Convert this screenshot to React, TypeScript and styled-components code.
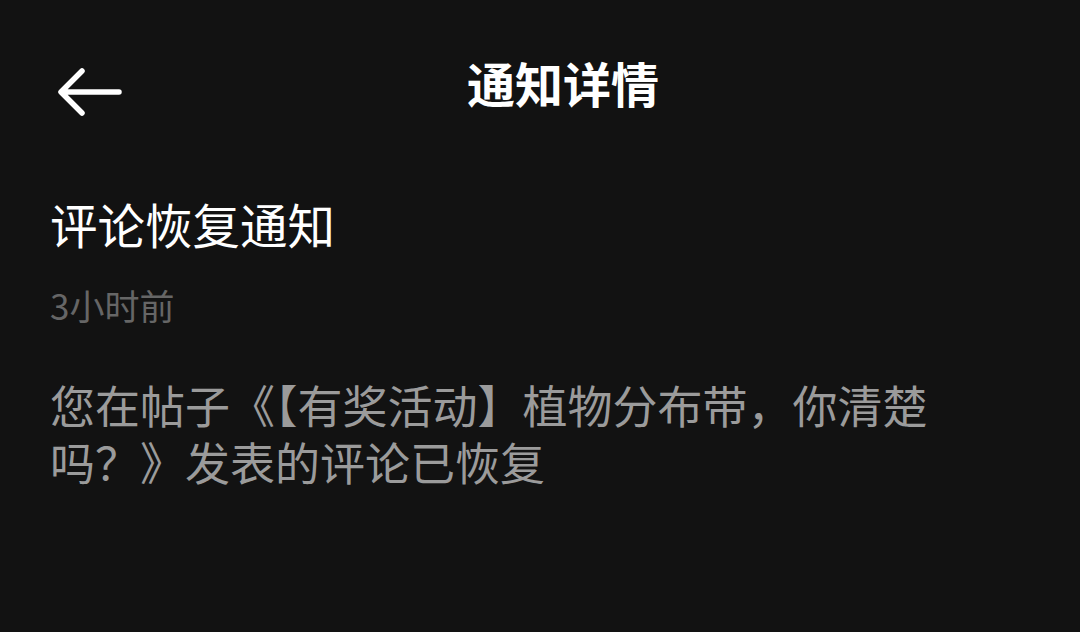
import React from 'react';
import styled, { createGlobalStyle } from 'styled-components';

const GlobalStyle = createGlobalStyle`
  html, body {
    margin: 0;
    padding: 0;
    background: #121212;
  }
  body {
    font-family: "Noto Sans CJK SC", "Noto Sans", sans-serif;
  }
`;

const notice = {
  title: '评论恢复通知',
  time: '3小时前',
  body: '您在帖子《【有奖活动】植物分布带，你清楚吗？》发表的评论已恢复',
};

export default function App() {
  return (
    <>
      <GlobalStyle />
      <Page>
        <Header>
          <BackButton aria-label="返回">
            <svg width="66" height="50" viewBox="0 0 66 50" fill="none">
              <path
                d="M63 25H6M26 4L5 25l21 21"
                stroke="#fff"
                strokeWidth="5.5"
                strokeLinecap="round"
                strokeLinejoin="round"
              />
            </svg>
          </BackButton>
          <HeaderTitle>通知详情</HeaderTitle>
        </Header>
        <Content>
          <NoticeTitle>{notice.title}</NoticeTitle>
          <NoticeTime>{notice.time}</NoticeTime>
          <NoticeBody>{notice.body}</NoticeBody>
        </Content>
      </Page>
    </>
  );
}

const Page = styled.div`
  width: 1080px;
  height: 632px;
  background: #121212;
  overflow: hidden;
`;

const Header = styled.div`
  position: relative;
  display: flex;
  align-items: center;
  height: 176px;
  padding: 0 0 0 56px;
  box-sizing: border-box;
`;

const BackButton = styled.div`
  display: flex;
  align-items: center;
  margin-top: 8px;
`;

const HeaderTitle = styled.div`
  position: absolute;
  left: 0;
  right: 0;
  top: 50px;
  padding-left: 46px;
  text-align: center;
  color: #fff;
  font-size: 48px;
  font-weight: 700;
  line-height: 64px;
`;

const Content = styled.div`
  display: flex;
  flex-direction: column;
  padding: 0 50px;
`;

const NoticeTitle = styled.div`
  color: #fff;
  font-size: 47.5px;
  line-height: 66px;
  margin-top: 15px;
`;

const NoticeTime = styled.div`
  color: #666;
  font-size: 35px;
  line-height: 48px;
  margin-top: 24px;
`;

const NoticeBody = styled.div`
  width: 950px;
  color: #9b9b9b;
  font-size: 45px;
  line-height: 57px;
  margin-top: 47px;
`;
